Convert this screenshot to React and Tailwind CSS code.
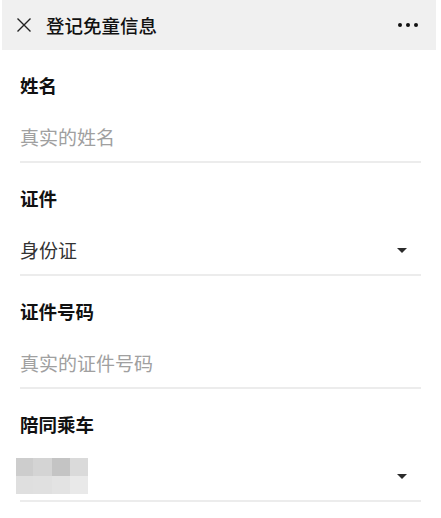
const mosaic = [
  "bg-[#cdcdcd]", "bg-[#d4d4d4]", "bg-[#c4c4c4]", "bg-[#dadada]",
  "bg-[#dfdfdf]", "bg-[#e0e0e0]", "bg-[#e3e3e3]", "bg-[#e9e9e9]",
];

function Caret() {
  return (
    <svg width="10" height="5" viewBox="0 0 10 5" className="mr-[14px] shrink-0">
      <path d="M0 0h10L5 5z" fill="#2b2b2b" />
    </svg>
  );
}

function Field({ label, children }) {
  return (
    <div>
      <div className="mt-[24px] h-[24px] flex items-center text-[18.5px] font-bold text-[#111]">{label}</div>
      <div className="mt-[15px] h-[50px] flex items-center justify-between border-b-2 border-[#ececec]">
        {children}
      </div>
    </div>
  );
}

export default function App() {
  return (
    <div className="w-[441px] h-[518px] bg-white overflow-hidden font-['Noto_Sans_CJK_SC',sans-serif]">
      <div className="ml-[2px] w-[434px] h-[50px] bg-[#f0f0f0] flex items-center pl-[14px] pr-[18px]">
        <svg width="16" height="16" viewBox="0 0 16 16" className="shrink-0">
          <path d="M1.5 1.5l13 13M14.5 1.5l-13 13" stroke="#222" strokeWidth="1.4" fill="none" />
        </svg>
        <span className="ml-[14px] text-[18.5px] font-medium text-[#111] leading-none">登记免童信息</span>
        <div className="ml-auto flex gap-[4px]">
          <span className="w-[4px] h-[4px] rounded-full bg-[#111]" />
          <span className="w-[4px] h-[4px] rounded-full bg-[#111]" />
          <span className="w-[4px] h-[4px] rounded-full bg-[#111]" />
        </div>
      </div>

      <div className="px-[20px]">
        <Field label="姓名">
          <span className="text-[19px] text-[#a0a0a0]">真实的姓名</span>
        </Field>
        <Field label="证件">
          <span className="text-[19px] text-[#333]">身份证</span>
          <Caret />
        </Field>
        <Field label="证件号码">
          <span className="text-[19px] text-[#a0a0a0]">真实的证件号码</span>
        </Field>
        <Field label="陪同乘车">
          <div className="-ml-[4px] grid grid-cols-[17px_19px_18px_18px] grid-rows-[18px_18px]">
            {mosaic.map((c, i) => (
              <div key={i} className={c} />
            ))}
          </div>
          <Caret />
        </Field>
      </div>
    </div>
  );
}
